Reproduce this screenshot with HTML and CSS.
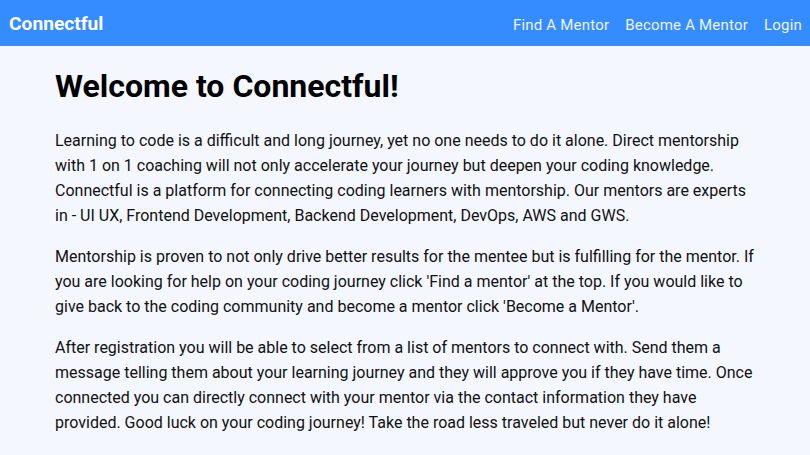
FILE: index.html
```html
<!DOCTYPE html>
<html lang="en">
<head>
<meta charset="utf-8">
<title>Connectful</title>
<link rel="stylesheet" href="styles.css">
</head>
<body>
<nav class="navbar">
  <a class="brand" href="#">Connectful</a>
  <ul class="nav-links">
    <li><a href="#">Find A Mentor</a></li>
    <li><a href="#">Become A Mentor</a></li>
    <li><a href="#">Login</a></li>
  </ul>
</nav>
<main class="content">
  <h1 class="title">Welcome to Connectful!</h1>
  <p class="text">Learning to code is a difficult and long journey, yet no one needs to do it alone. Direct mentorship with 1 on 1 coaching will not only accelerate your journey but deepen your coding knowledge. Connectful is a platform for connecting coding learners with mentorship. Our mentors are experts in - UI UX, Frontend Development, Backend Development, DevOps, AWS and GWS.</p>
  <p class="text">Mentorship is proven to not only drive better results for the mentee but is fulfilling for the mentor. If you are looking for help on your coding journey click 'Find a mentor' at the top. If you would like to give back to the coding community and become a mentor click 'Become a Mentor'.</p>
  <p class="text">After registration you will be able to select from a list of mentors to connect with. Send them a message telling them about your learning journey and they will approve you if they have time. Once connected you can directly connect with your mentor via the contact information they have provided. Good luck on your coding journey! Take the road less traveled but never do it alone!</p>
</main>
</body>
</html>
```
FILE: styles.css
```css
* { box-sizing: border-box; }
html, body {
  margin: 0;
  padding: 0;
  background: #f4f7fe;
  font-family: Roboto, "Liberation Sans", Arial, sans-serif;
  color: #111;
}
.navbar {
  height: 46px;
  background: #358cff;
  display: flex;
  align-items: center;
  justify-content: space-between;
  padding: 1px 8px 0 9px;
}
.brand {
  color: #fff;
  font-weight: 700;
  font-size: 19.2px;
  text-decoration: none;
}
.nav-links {
  display: flex;
  list-style: none;
  margin: 0;
  padding: 0;
  padding-top: 1px;
  gap: 16px;
}
.nav-links a {
  color: #eef4ff;
  font-size: 15px;
  letter-spacing: 0.2px;
  text-decoration: none;
}
.content {
  width: 700px;
  margin: 0 auto;
  padding-top: 21px;
}
.title {
  font-size: 32px;
  font-weight: 700;
  line-height: 38px;
  margin: 0 0 23px;
  color: #000;
}
.text {
  font-size: 16px;
  line-height: 25px;
  margin: 0 0 16px;
}
```
